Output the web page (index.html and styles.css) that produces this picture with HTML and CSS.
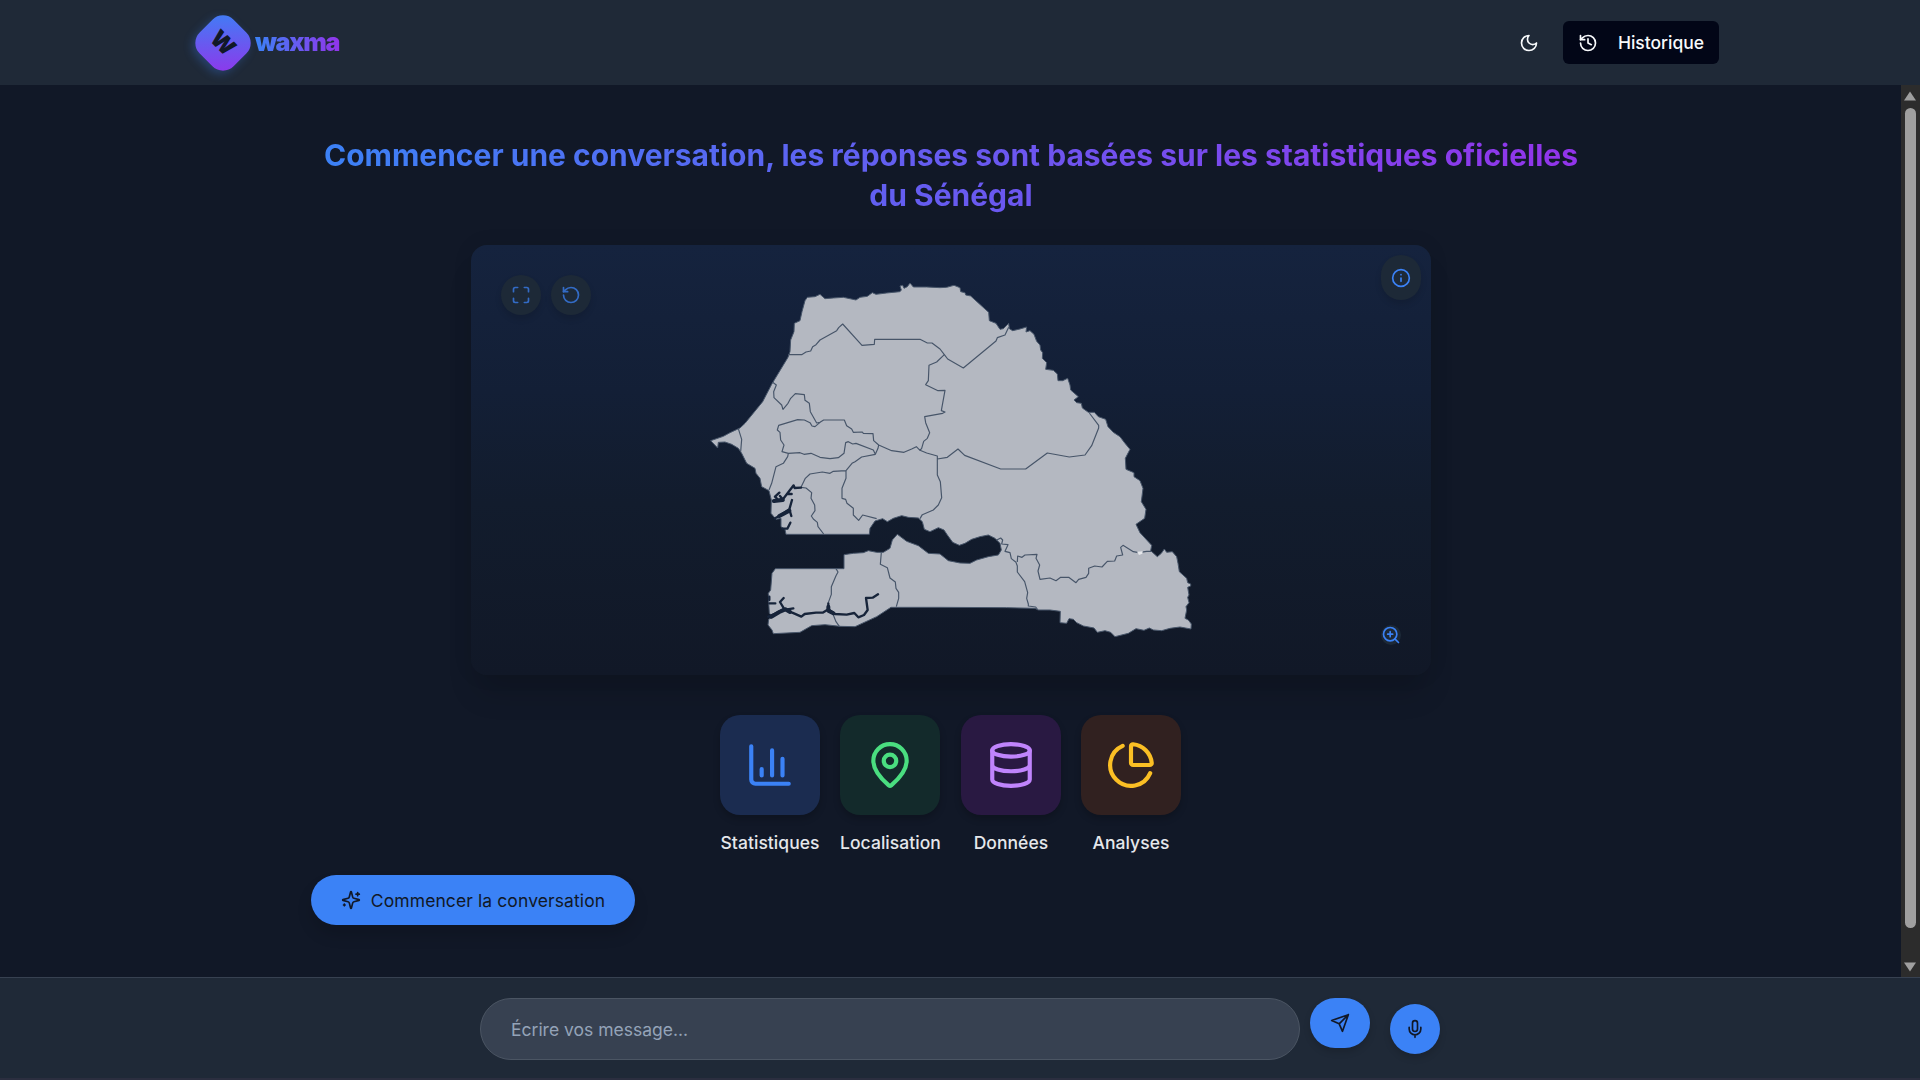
FILE: index.html
```html
<!DOCTYPE html>
<html lang="fr">
<head>
<meta charset="utf-8">
<title>waxma</title>
<link rel="stylesheet" href="styles.css">
</head>
<body>
<header class="topbar">
  <div class="brand">
    <div class="brand-mark"><span>W</span></div>
    <span class="brand-name">waxma</span>
  </div>
  <div class="top-actions">
    <svg class="icon" viewBox="0 0 24 24"><path d="M12 3a6 6 0 0 0 9 9 9 9 0 1 1-9-9Z"/></svg>
    <button class="history-btn">
      <svg class="icon" viewBox="0 0 24 24"><path d="M3 12a9 9 0 1 0 9-9 9.75 9.75 0 0 0-6.74 2.74L3 8"/><path d="M3 3v5h5"/><path d="M12 7v5l4 2"/></svg>
      Historique
    </button>
  </div>
</header>

<div class="viewport">
  <main class="content">
    <h1 class="title">Commencer une conversation, les réponses sont basées sur les statistiques oficielles du Sénégal</h1>

    <section class="map-card">
      <svg class="map" viewBox="471 245 960 430">
        <g transform="translate(700 270) scale(.33333)">
          <path class="land" d="M32 512 70 499 90 488 120 474 135 460 188 395 215 343 264 262 270 245 272 210 282 185 283 160 300 152 306 125 315 92 322 82 345 80 360 73 375 86 400 84 430 82 468 90 480 82 502 79 517 68 528 73 560 69 600 65 604 60 600 48 608 46 612 55 622 50 630 39 640 51 680 51 720 53 740 52 762 46 780 53 782 65 795 68 797 75 812 78 866 127 868 152 888 160 900 178 910 176 926 160 928 176 938 182 960 177 980 171 978 186 990 182 1002 193 1010 214 1020 225 1022 240 1028 248 1027 265 1040 278 1037 298 1060 301 1072 312 1074 332 1088 332 1103 325 1110 345 1112 360 1135 380 1122 390 1130 398 1144 400 1147 414 1165 427 1183 427 1195 440 1217 448 1224 470 1240 487 1260 500 1275 520 1290 538 1276 565 1278 598 1302 608 1302 620 1320 632 1329 655 1324 695 1338 718 1334 745 1308 763 1320 788 1355 826 1352 842 1372 860 1384 850 1393 837 1400 847 1417 845 1430 860 1434 880 1438 905 1460 925 1463 938 1472 942 1472 948 1463 952 1467 975 1463 982 1467 998 1458 1010 1460 1020 1455 1045 1465 1050 1474 1062 1473 1077 1440 1071 1410 1075 1385 1082 1360 1080 1348 1074 1332 1081 1308 1076 1285 1090 1245 1100 1232 1087 1215 1082 1192 1087 1182 1074 1150 1068 1130 1058 1120 1048 1107 1046 1100 1060 1080 1058 1081 1024 1050 1020 1015 1020 1005 1015 920 1013 720 1012 573 1012 530 1040 465 1070 420 1069 375 1064 335 1067 300 1087 220 1091 216 1080 204 1065 206 1048 220 1040 208 1030 206 995 205 970 212 960 216 910 226 896 432 896 432 854 460 850 490 848 505 842 530 847 550 847 570 835 577 810 592 793 620 814 655 827 685 850 720 852 745 872 780 879 810 880 830 870 865 860 895 855 904 840 900 820 885 805 865 795 840 800 815 808 795 820 778 826 758 817 742 795 732 780 715 773 690 785 673 778 667 755 655 744 625 742 605 737 580 745 562 755 548 746 525 753 510 775 508 793 258 793 255 778 243 770 243 745 228 748 213 730 214 690 207 662 185 650 180 625 168 610 165 595 140 580 125 550 115 535 95 523 75 516 55 517 53 534Z"/>
          <g class="borders">
            <path d="M264 254H305L318 246 332 243 338 230 348 224 360 210 410 182 416 173 428 162 486 226 523 223 524 208H660L682 219 696 219 720 237 733 254 743 267 790 294 888 213 892 203 915 195 926 172"/>
            <path d="M733 254 710 276 687 286 685 332 677 344 714 362 735 361 724 422 735 426 728 430 674 440 677 458 689 488 682 505 671 514 665 535 660 541 649 530 635 537 612 547 575 542 536 525 521 512 519 491 490 490 487 486 460 487 455 477 440 467 433 450H371L360 457 350 459 342 445 331 425 328 400 315 391 313 374 286 371 272 385 264 400 249 418 245 405 222 383 221 365 229 345 218 337"/>
            <path d="M115 476 125 508 122 545M360 457 345 470 336 468 330 458 313 450 293 449 236 466 232 480 240 487 242 510 252 525 246 545 265 550 300 548 312 553 333 550 360 562 390 566 415 563 432 550 437 518 445 515 458 522 468 520 520 540 526 553 534 535 536 525M526 553 485 561 465 575 456 580 438 602 400 604 390 610 367 606 330 612 316 625 303 652M265 550 263 560 250 580 228 590 215 640 207 660M438 602 438 625 426 655 426 685 437 688 441 700 460 715 460 735 476 751 488 735 530 746M660 541 680 549 712 558V615L721 635 725 683 715 705 700 720 667 734 660 746M712 567 742 562 774 537 794 556 902 597H977L1042 549 1108 561 1155 555 1175 527 1196 474V466L1168 429"/>
            <path d="M303 652 318 654 335 668 333 685 344 705 345 722 334 738 340 747 352 757 354 770 371 792M544 847 541 883 562 893 570 924 586 936 588 955 596 967 596 985 589 1010M408 896 414 906 408 917 394 950 394 973 385 998M398 1030 408 1055 418 1069"/>
            <path d="M889 811 902 804 908 810 905 822 924 824 915 844 930 848 934 866 948 877 952 888V906L974 935 983 968 980 985 985 1002 985 1008 1007 1011 1014 1020M952 876 953 858 966 862 975 855 1011 853 1008 865 1019 885 1014 903 1020 928 1050 924 1068 932 1082 922 1106 922 1128 938 1136 928 1158 922 1166 910 1166 895 1184 888 1206 891 1222 874 1244 873 1250 858 1268 855 1262 832 1269 826 1300 845 1316 848 1340 844 1353 844"/>
          </g>
          <path class="glint" d="M1311 845 1328 843 1327 851 1317 855Z"/>
          <g class="rivers">
            <path d="M303 653 284 654 281 646 270 660 250 686 220 694M250 690 240 678M235 690 225 680 238 668M262 672H275M276 690 268 718 238 738 225 745M268 718 274 738M271 758 262 776 247 776M205 1040 228 1030 252 1016 275 1027 304 1040 314 1032 348 1028 368 1028 385 1018 405 1032 440 1034 463 1029 475 1042 492 1035 503 1020 498 984 518 983 534 973M252 1016 240 996 251 984M262 1018 280 1015M208 1000H226M208 990V980M385 1018V1000"/>
            <path class="wide" d="M214 1040 238 1026 256 1018 270 1026M238 738 268 722M385 1010V1022L400 1030M222 693 248 690"/>
          </g>
        </g>
      </svg>
      <div class="map-tools">
        <button class="round"><svg class="icon" viewBox="0 0 24 24"><path d="M8 3H5a2 2 0 0 0-2 2v3M21 8V5a2 2 0 0 0-2-2h-3M3 16v3a2 2 0 0 0 2 2h3M16 21h3a2 2 0 0 0 2-2v-3"/></svg></button>
        <button class="round"><svg class="icon" viewBox="0 0 24 24"><path d="M3 12a9 9 0 1 0 9-9 9.75 9.75 0 0 0-6.74 2.74L3 8"/><path d="M3 3v5h5"/></svg></button>
      </div>
      <button class="round info"><svg class="icon" viewBox="0 0 24 24"><circle cx="12" cy="12" r="10"/><path d="M12 16v-4M12 8h.01"/></svg></button>
      <button class="zoom-in"><svg class="icon" viewBox="0 0 24 24"><circle cx="11" cy="11" r="8"/><path d="m21 21-4.35-4.35M11 8v6M8 11h6"/></svg></button>
    </section>

    <section class="features">
      <div class="feature">
        <div class="tile blue"><svg class="icon" viewBox="0 0 24 24"><path d="M3 3v16a2 2 0 0 0 2 2h16M18 17V9M13 17V5M8 17v-3"/></svg></div>
        <span>Statistiques</span>
      </div>
      <div class="feature">
        <div class="tile green"><svg class="icon" viewBox="0 0 24 24"><path d="M20 10c0 4.993-5.539 10.193-7.399 11.799a1 1 0 0 1-1.202 0C9.539 20.193 4 14.993 4 10a8 8 0 0 1 16 0"/><circle cx="12" cy="10" r="3"/></svg></div>
        <span>Localisation</span>
      </div>
      <div class="feature">
        <div class="tile purple"><svg class="icon" viewBox="0 0 24 24"><ellipse cx="12" cy="5" rx="9" ry="3"/><path d="M3 5V19A9 3 0 0 0 21 19V5M3 12A9 3 0 0 0 21 12"/></svg></div>
        <span>Données</span>
      </div>
      <div class="feature">
        <div class="tile amber"><svg class="icon" viewBox="0 0 24 24"><path d="M21 12c.552 0 1.005-.449.95-.998a10 10 0 0 0-8.953-8.951c-.55-.055-.998.398-.998.95v8a1 1 0 0 0 1 1z"/><path d="M21.21 15.89A10 10 0 1 1 8 2.83"/></svg></div>
        <span>Analyses</span>
      </div>
    </section>

    <button class="start-btn">
      <svg class="icon" viewBox="0 0 24 24"><path d="M9.937 15.5A2 2 0 0 0 8.5 14.063l-6.135-1.582a.5.5 0 0 1 0-.962L8.5 9.936A2 2 0 0 0 9.937 8.5l1.582-6.135a.5.5 0 0 1 .963 0L14.063 8.5A2 2 0 0 0 15.5 9.937l6.135 1.581a.5.5 0 0 1 0 .964L15.5 14.063a2 2 0 0 0-1.437 1.437l-1.582 6.135a.5.5 0 0 1-.963 0z"/><path d="M20 3v4M22 5h-4M4 17v2M5 18H3"/></svg>
      Commencer la conversation
    </button>
  </main>
  <div class="scrollbar">
    <svg class="arrow" viewBox="0 0 14 10"><path d="M7 .5 13 9.500H1Z"/></svg>
    <div class="thumb"></div>
    <svg class="arrow" viewBox="0 0 14 10"><path d="M7 9.500 13 .5H1Z"/></svg>
  </div>
</div>

<footer class="composer">
  <input class="message" type="text" placeholder="Écrire vos message...">
  <button class="send"><svg class="icon" viewBox="0 0 24 24"><path d="m22 2-7 20-4-9-9-4ZM22 2 11 13"/></svg></button>
  <button class="mic"><svg class="icon" viewBox="0 0 24 24"><path d="M12 2a3 3 0 0 0-3 3v7a3 3 0 0 0 6 0V5a3 3 0 0 0-3-3Z"/><path d="M19 10v2a7 7 0 0 1-14 0v-2M12 19v3"/></svg></button>
</footer>
</body>
</html>
```
FILE: styles.css
```css
* { box-sizing: border-box; }
body {
  margin: 0;
  height: 1080px;
  display: flex;
  flex-direction: column;
  overflow: hidden;
  background: #111827;
  color: #f8fafc;
  font: 17.5px/25px Inter, sans-serif;
}
button {
  border: 0;
  padding: 0;
  font: inherit;
  color: inherit;
  display: flex;
  align-items: center;
  justify-content: center;
}
.icon {
  width: 20px;
  height: 20px;
  flex: none;
  fill: none;
  stroke: currentColor;
  stroke-width: 2;
  stroke-linecap: round;
  stroke-linejoin: round;
}

.topbar {
  height: 85px;
  flex: none;
  padding: 0 201px 0 199px;
  display: flex;
  align-items: center;
  justify-content: space-between;
  background: #1f2937;
}
.brand { display: flex; align-items: center; gap: 8px; }
.brand-mark {
  width: 48px;
  height: 48px;
  border-radius: 15px;
  background: linear-gradient(135deg, #3b82f6, #9333ea);
  box-shadow: 0 4px 10px rgba(59, 130, 246, .3);
  transform: rotate(45deg);
  display: flex;
  align-items: center;
  justify-content: center;
  color: #111827;
  font-size: 23px;
  font-weight: 900;
}
.brand-name {
  font-size: 25px;
  line-height: 32px;
  margin-bottom: 1px;
  font-weight: 900;
  letter-spacing: -1.25px;
  padding-right: 2px;
  background: linear-gradient(90deg, #3b82f6, #9333ea);
  background-clip: text;
  color: transparent;
}
.top-actions { display: flex; align-items: center; gap: 24px; }
.history-btn {
  width: 156px;
  height: 43px;
  gap: 20px;
  border-radius: 6px;
  background: #020617;
  font-weight: 500;
}

.viewport { flex: 1; min-height: 0; display: flex; }
.content {
  flex: 1;
  padding: 50px 311px 0;
  display: flex;
  flex-direction: column;
  align-items: center;
}
.title {
  width: 1280px;
  margin: 0 0 30px;
  font-size: 30px;
  line-height: 40px;
  font-weight: 700;
  text-align: center;
  background: linear-gradient(90deg, #3b82f6, #9333ea);
  background-clip: text;
  color: transparent;
}
.map-card {
  position: relative;
  width: 960px;
  height: 430px;
  flex: none;
  border-radius: 16px;
  background: linear-gradient(180deg, #15233e, #131f36 34%, #121c2d 60%, #111827);
  box-shadow: 0 24px 30px -6px rgba(0, 0, 0, .14), 0 0 20px rgba(0, 0, 0, .08);
}
.map { display: block; width: 960px; height: 430px; }
.land { fill: #b4b8c1; stroke: #475569; stroke-width: 3; stroke-linejoin: round; }
.borders { fill: none; stroke: #475569; stroke-width: 3.500; stroke-linejoin: round; }
.rivers { fill: none; stroke: #17243a; stroke-width: 7; stroke-linejoin: round; stroke-linecap: round; }
.wide { stroke-width: 12; }
.glint { fill: #e5e7eb; }
.round {
  width: 40px;
  height: 40px;
  border-radius: 20px;
  background: #1d2937;
  color: #3b82f6;
  box-shadow: 0 4px 6px rgba(0, 0, 0, .12);
}
.map-tools { position: absolute; left: 30px; top: 30px; display: flex; gap: 10px; }
.map-tools .icon { opacity: .75; }
.info { position: absolute; right: 10px; top: 10px; height: 45px; }
.zoom-in {
  position: absolute;
  right: 30px;
  bottom: 30px;
  border-radius: 10px;
  background: #1d2937;
  color: #3b82f6;
}

.features { display: flex; gap: 20px; margin: 40px 1px 0 0; }
.feature {
  display: flex;
  flex-direction: column;
  align-items: center;
  gap: 15px;
  font-weight: 500;
  letter-spacing: .05px;
  color: #e5e7eb;
}
.tile {
  width: 100px;
  height: 100px;
  border-radius: 20px;
  display: flex;
  align-items: center;
  justify-content: center;
  box-shadow: 0 4px 7px rgba(0, 0, 0, .2);
}
.tile .icon { width: 50px; height: 50px; }
.blue { background: #1b2c50; color: #3b82f6; }
.green { background: #132a2b; color: #4ade80; }
.purple { background: #291942; color: #c084fc; }
.amber { background: #312120; color: #fbbf24; }

.start-btn {
  align-self: flex-start;
  width: 324px;
  height: 50px;
  flex: none;
  margin-top: 20px;
  gap: 10px;
  border-radius: 25px;
  background: #3b82f6;
  color: #111827;
  letter-spacing: .1px;
  box-shadow: 0 10px 15px rgba(0, 0, 0, .14);
}

.scrollbar {
  width: 20px;
  margin-left: -1px;
  padding: 6px 1px 5px 0;
  display: flex;
  flex-direction: column;
  align-items: center;
  gap: 7px;
  background: #2c2c2c;
}
.arrow { width: 14px; height: 10px; flex: none; fill: #9f9f9f; }
.thumb { width: 11px; height: 820px; border-radius: 6px; background: #9f9f9f; }
.scrollbar .arrow:last-child { margin-top: auto; }

.composer {
  height: 103px;
  flex: none;
  padding-top: 20px;
  display: flex;
  justify-content: center;
  align-items: flex-start;
  background: #1f2937;
  border-top: 1px solid #374151;
  border-bottom: 2px solid #2b2e3f;
}
.message {
  width: 820px;
  height: 62px;
  padding: 0 30px;
  border: 1px solid #4b5563;
  border-radius: 31px;
  background: #374151;
  font: inherit;
  color: #f8fafc;
}
.message::placeholder { color: #94a3b8; }
.send, .mic {
  height: 50px;
  border-radius: 25px;
  background: #3b82f6;
  color: #111827;
  box-shadow: 0 4px 7px rgba(0, 0, 0, .15);
}
.send { width: 60px; margin: 0 20px 0 10px; }
.mic { width: 50px; margin-top: 6px; }
```
